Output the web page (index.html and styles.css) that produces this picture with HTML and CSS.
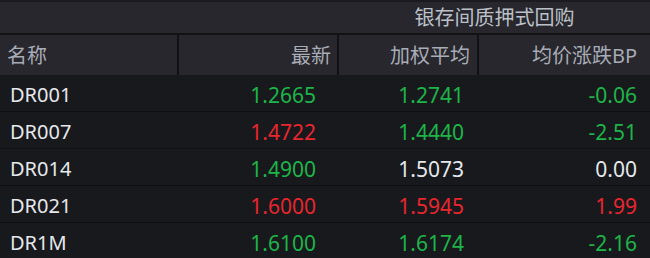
FILE: index.html
```html
<!DOCTYPE html>
<html lang="zh-CN">
<head>
<meta charset="utf-8">
<link rel="stylesheet" href="styles.css">
</head>
<body>
<div class="board">
  <div class="title-row">
    <div class="title">银存间质押式回购</div>
  </div>
  <div class="head-row">
    <div class="hcell c1">名称</div>
    <div class="hcell c2">最新</div>
    <div class="hcell c3">加权平均</div>
    <div class="hcell c4">均价涨跌BP</div>
  </div>
  <div class="row">
    <div class="cell c1 name">DR001</div>
    <div class="cell c2 up">1.2665</div>
    <div class="cell c3 up">1.2741</div>
    <div class="cell c4 up">-0.06</div>
  </div>
  <div class="row">
    <div class="cell c1 name">DR007</div>
    <div class="cell c2 down">1.4722</div>
    <div class="cell c3 up">1.4440</div>
    <div class="cell c4 up">-2.51</div>
  </div>
  <div class="row">
    <div class="cell c1 name">DR014</div>
    <div class="cell c2 up">1.4900</div>
    <div class="cell c3 flat">1.5073</div>
    <div class="cell c4 flat">0.00</div>
  </div>
  <div class="row">
    <div class="cell c1 name">DR021</div>
    <div class="cell c2 down">1.6000</div>
    <div class="cell c3 down">1.5945</div>
    <div class="cell c4 down">1.99</div>
  </div>
  <div class="row">
    <div class="cell c1 name">DR1M</div>
    <div class="cell c2 up">1.6100</div>
    <div class="cell c3 up">1.6174</div>
    <div class="cell c4 up">-2.16</div>
  </div>
</div>
</body>
</html>
```

FILE: styles.css
```css
html, body {
  margin: 0;
  padding: 0;
  background: #17191d;
}
.board {
  width: 650px;
  height: 258px;
  overflow: hidden;
  font-family: "Noto Sans", "Noto Sans CJK SC", sans-serif;
  font-size: 20px;
  background: #17191d;
}
.title-row {
  height: 31px;
  border-top: 2px solid #1b1b1f;
  border-bottom: 2px solid #121215;
  background: #27272d;
  display: grid;
  grid-template-columns: 339px 311px;
}
.title {
  grid-column: 2;
  text-align: center;
  color: #bcc0c8;
  line-height: 31px;
}
.head-row {
  height: 40px;
  background: #27272d;
  display: grid;
  grid-template-columns: 179px 160px 140px 171px;
}
.hcell {
  color: #a7acb6;
  padding-top: 1px;
  line-height: 39px;
  border-right: 2px solid #121215;
}
.hcell.c1 {
  padding-left: 7px;
  text-align: left;
}
.hcell.c2 { text-align: right; padding-right: 6px; }
.hcell.c3 { text-align: right; padding-right: 7px; }
.hcell.c4 { text-align: right; padding-right: 13px; border-right: none; }
.row {
  height: 36px;
  border-bottom: 1px solid #0f1013;
  display: grid;
  grid-template-columns: 179px 160px 140px 171px;
}
.cell {
  padding-top: 4px;
  line-height: 32px;
  text-align: right;
  font-size: 21px;
}
.cell.c1 { text-align: left; padding-left: 10px; font-size: 20px; }
.cell.c2 { padding-right: 23px; }
.cell.c3 { padding-right: 15px; }
.cell.c4 { padding-right: 13px; }
.name { color: #e6e8ec; }
.up { color: #1eb548; }
.down { color: #e8262e; }
.flat { color: #e6e8ec; }
```
